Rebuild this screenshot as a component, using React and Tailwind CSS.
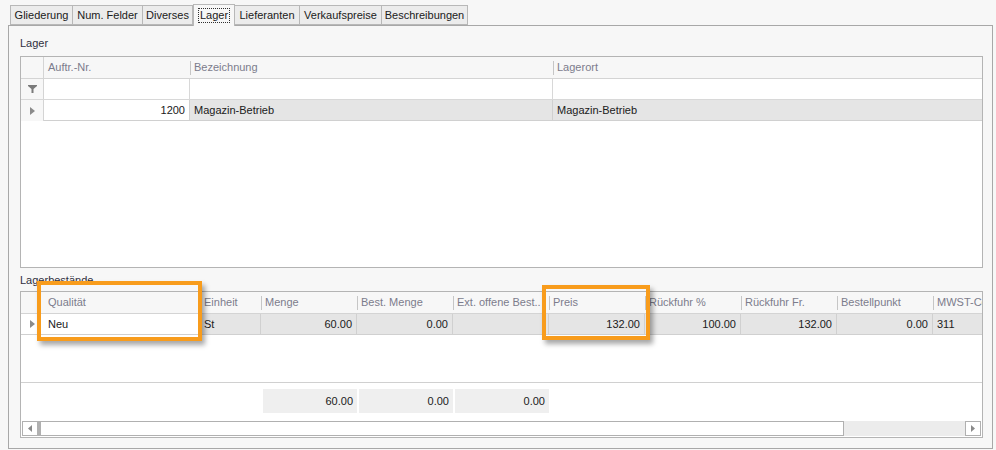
import React from 'react';

const font = { fontFamily: '"Liberation Sans", Arial, sans-serif' };

const tabs = ['Gliederung', 'Num. Felder', 'Diverses', 'Lager', 'Lieferanten', 'Verkaufspreise', 'Beschreibungen'];
const tabWidths = ['w-[63px]', 'w-[71px]', 'w-[51px]', 'w-[42px]', 'w-[66px]', 'w-[83px]', 'w-[87px]'];

const Arrow = () => (
  <svg width="5" height="8" viewBox="0 0 5 8" className="fill-[#8a8a8a]">
    <path d="M0 0 L5 4 L0 8 Z" />
  </svg>
);

const Funnel = () => (
  <svg width="9" height="8" viewBox="0 0 9 8" className="fill-[#7a7a7a]">
    <path d="M0 0 H9 V1 L5.5 4 V8 H3.5 V4 L0 1 Z" />
  </svg>
);

const HeaderCell = ({ w, children, first }) => (
  <div className={`${w} h-full flex items-center shrink-0 relative overflow-hidden`}>
    {!first && <div className="absolute left-0 top-[4px] bottom-[3px] w-px bg-[#c6c6c6]" />}
    <span className="pl-[4px] text-[#7c7c8c] whitespace-nowrap">{children}</span>
  </div>
);

const grid2Cols = [
  { w: 'w-[156px]', label: 'Qualität', value: 'Neu', white: true },
  { w: 'w-[61px]', label: 'Einheit', value: 'St' },
  { w: 'w-[96px]', label: 'Menge', value: '60.00', right: true },
  { w: 'w-[96px]', label: 'Best. Menge', value: '0.00', right: true },
  { w: 'w-[96px]', label: 'Ext. offene Best..', value: '', right: true },
  { w: 'w-[96px]', label: 'Preis', value: '132.00', right: true },
  { w: 'w-[96px]', label: 'Rückfuhr %', value: '100.00', right: true },
  { w: 'w-[96px]', label: 'Rückfuhr Fr.', value: '132.00', right: true },
  { w: 'w-[96px]', label: 'Bestellpunkt', value: '0.00', right: true },
  { w: 'w-[60px]', label: 'MWST-Co', value: '311' },
];

export default function App() {
  return (
    <div className="w-[996px] h-[450px] bg-[#f7f7f7] text-[11px] text-[#202020] relative overflow-hidden" style={font}>
      {/* Tab strip */}
      <div className="flex items-end h-[25px] pl-[10px]">
        {tabs.map((t, i) => {
          const active = t === 'Lager';
          return (
            <div
              key={t}
              className={`${tabWidths[i]} flex items-center justify-center border border-[#b8b8b8] ${
                active
                  ? 'h-[22px] bg-[#f7f7f7] border-b-0 relative z-10 -mb-px'
                  : 'h-[20px] bg-[#ececec] -ml-px first:ml-0'
              }`}
            >
              <span className={active ? 'outline outline-1 outline-dotted outline-[#303030] px-[1px] leading-[13px]' : ''}>{t}</span>
            </div>
          );
        })}
      </div>

      {/* Panel */}
      <div className="ml-[8px] w-[985px] h-[424px] border border-[#a8a8a8] pl-[11px] pr-[9px]">
        <div className="h-[30px] pt-[11px] leading-[13px] text-[#303040]">Lager</div>

        {/* Grid 1 */}
        <div className="h-[212px] border border-[#b4b4b4] bg-white flex flex-col">
          <div className="h-[22px] flex bg-[#f7f7f7] border-b border-[#d4d4d4]">
            <div className="w-[23px] border-r border-[#d4d4d4]" />
            <HeaderCell w="w-[146px]" first>Auftr.-Nr.</HeaderCell>
            <HeaderCell w="w-[363px]">Bezeichnung</HeaderCell>
            <HeaderCell w="flex-1">Lagerort</HeaderCell>
          </div>
          <div className="h-[21px] flex border-b border-[#d8d8d8]">
            <div className="w-[23px] bg-[#f7f7f7] border-r border-[#d4d4d4] flex items-center justify-center">
              <Funnel />
            </div>
            <div className="w-[146px] border-r border-[#d8d8d8]" />
            <div className="w-[363px] border-r border-[#d8d8d8]" />
            <div className="flex-1" />
          </div>
          <div className="h-[21px] flex">
            <div className="w-[23px] bg-[#f7f7f7] border-r border-[#d4d4d4] flex items-center justify-center">
              <Arrow />
            </div>
            <div className="w-[146px] bg-white border-b border-r border-[#d0d0d0] flex items-center justify-end pr-[4px]">1200</div>
            <div className="w-[363px] bg-[#e5e5e5] border-b border-r border-[#d0d0d0] flex items-center pl-[4px]">Magazin-Betrieb</div>
            <div className="flex-1 bg-[#e5e5e5] border-b border-[#d0d0d0] flex items-center pl-[4px]">Magazin-Betrieb</div>
          </div>
          <div className="flex-1" />
        </div>

        <div className="h-[23px] pt-[6px] leading-[13px] text-[#303040]">Lagerbestände</div>

        {/* Grid 2 */}
        <div className="h-[147px] border border-[#b4b4b4] bg-white flex flex-col overflow-hidden">
          <div className="h-[22px] flex bg-[#f7f7f7] border-b border-[#d4d4d4]">
            <div className="w-[23px] shrink-0" />
            {grid2Cols.map((c, i) => (
              <HeaderCell key={c.label} w={c.w} first={i === 0}>{c.label}</HeaderCell>
            ))}
          </div>
          <div className="h-[21px] flex border-b border-[#d0d0d0]">
            <div className="w-[23px] shrink-0 bg-white flex items-center justify-center">
              <Arrow />
            </div>
            {grid2Cols.map((c) => (
              <div
                key={c.label}
                className={`${c.w} shrink-0 border-r border-[#d0d0d0] flex items-center px-[4px] ${c.white ? 'bg-white' : 'bg-[#e5e5e5]'} ${
                  c.right ? 'justify-end' : ''
                }`}
              >
                {c.value}
              </div>
            ))}
          </div>
          <div className="h-[48px] border-b border-[#d0d0d0]" />
          <div className="h-[38px] flex items-start pt-[6px] pl-[242px] gap-[2px]">
            {['60.00', '0.00', '0.00'].map((v, i) => (
              <div key={i} className="w-[94px] h-[24px] bg-[#efefef] flex items-center justify-end pr-[4px]">{v}</div>
            ))}
          </div>
          {/* Scrollbar */}
          <div className="h-[15px] mx-[1px] flex bg-[#ececec]">
            <div className="w-[16px] h-full border border-[#b0b0b0] bg-white flex items-center justify-center">
              <svg width="4" height="7" viewBox="0 0 4 7" className="fill-[#8a8a8a]"><path d="M4 0 L0 3.5 L4 7 Z" /></svg>
            </div>
            <div className="w-[806px] h-full border border-[#b0b0b0] border-l-[3px] bg-white" />
            <div className="flex-1" />
            <div className="w-[16px] h-full border border-[#b0b0b0] bg-white flex items-center justify-center">
              <svg width="4" height="7" viewBox="0 0 4 7" className="fill-[#8a8a8a]"><path d="M0 0 L4 3.5 L0 7 Z" /></svg>
            </div>
          </div>
        </div>
      </div>

      {/* Highlight boxes */}
      <div className="absolute left-[37px] top-[281px] w-[165px] h-[60px] border-[4px] border-[#f89c1c] shadow-[3px_4px_5px_rgba(0,0,0,0.35)]" />
      <div className="absolute left-[542px] top-[285px] w-[108px] h-[55px] border-[4px] border-[#f89c1c] shadow-[3px_4px_5px_rgba(0,0,0,0.35)]" />
    </div>
  );
}
